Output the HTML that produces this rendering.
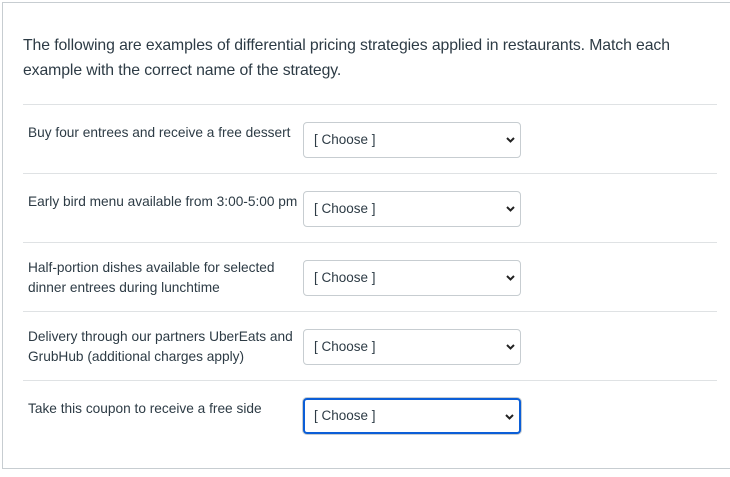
<!DOCTYPE html>
<html><head><style>
body{margin:0;width:730px;height:477px;background:#fff;font-family:"Liberation Sans",sans-serif;color:#2d3b45;position:relative;overflow:hidden}
.box{position:absolute;left:2px;top:2px;width:740px;height:467px;border:1px solid #c7cdd1;box-sizing:border-box}
.q{position:absolute;left:23px;top:33px;font-size:15.8px;line-height:25px;width:690px;letter-spacing:-0.1px}
.hr{position:absolute;left:23px;width:694px;height:1px;background:#dfe2e4}
.lbl{position:absolute;left:28px;font-size:13.7px;line-height:20px;width:276px;white-space:nowrap}
.sel{position:absolute;left:303px;width:218px;height:36px;border:1px solid #c7cdd1;border-radius:4px;box-sizing:border-box;font-size:13.5px;line-height:34px;padding-left:10px;background:#fff}
.sel svg{position:absolute;right:5px;top:14px}
.act{border:2px solid #0b5ed7;line-height:32px;padding-left:9px;box-shadow:0 0 0 1px #c7cdd1}
</style></head><body>
<div class="box"></div>
<div class="q">The following are examples of differential pricing strategies applied in restaurants. Match each<br>example with the correct name of the strategy.</div>
<div class="hr" style="top:104px"></div>
<div class="hr" style="top:173px"></div>
<div class="hr" style="top:242px"></div>
<div class="hr" style="top:311px"></div>
<div class="hr" style="top:380px"></div>
<div class="lbl" style="top:123px">Buy four entrees and receive a free dessert</div>
<div class="lbl" style="top:192px">Early bird menu available from 3:00-5:00 pm</div>
<div class="lbl" style="top:258px">Half-portion dishes available for selected<br>dinner entrees during lunchtime</div>
<div class="lbl" style="top:327px">Delivery through our partners UberEats and<br>GrubHub (additional charges apply)</div>
<div class="lbl" style="top:399px">Take this coupon to receive a free side</div>
<div class="sel" style="top:122px">[ Choose ]<svg width="9" height="6"><path d="M1 1L4.5 4.5L8 1" stroke="#222" stroke-width="2" fill="none"/></svg></div>
<div class="sel" style="top:191px">[ Choose ]<svg width="9" height="6"><path d="M1 1L4.5 4.5L8 1" stroke="#222" stroke-width="2" fill="none"/></svg></div>
<div class="sel" style="top:260px">[ Choose ]<svg width="9" height="6"><path d="M1 1L4.5 4.5L8 1" stroke="#222" stroke-width="2" fill="none"/></svg></div>
<div class="sel" style="top:329px">[ Choose ]<svg width="9" height="6"><path d="M1 1L4.5 4.5L8 1" stroke="#222" stroke-width="2" fill="none"/></svg></div>
<div class="sel act" style="top:398px">[ Choose ]<svg width="9" height="6"><path d="M1 1L4.5 4.5L8 1" stroke="#222" stroke-width="2" fill="none"/></svg></div>
</body></html>
